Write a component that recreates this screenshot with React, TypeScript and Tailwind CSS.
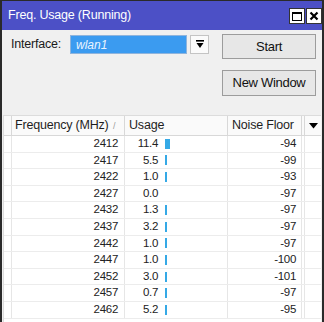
import React from "react";

type Row = { freq: number; usage: number; noise: number };

const rows: Row[] = [
  { freq: 2412, usage: 11.4, noise: -94 },
  { freq: 2417, usage: 5.5, noise: -99 },
  { freq: 2422, usage: 1.0, noise: -93 },
  { freq: 2427, usage: 0.0, noise: -97 },
  { freq: 2432, usage: 1.3, noise: -97 },
  { freq: 2437, usage: 3.2, noise: -97 },
  { freq: 2442, usage: 1.0, noise: -97 },
  { freq: 2447, usage: 1.0, noise: -100 },
  { freq: 2452, usage: 3.0, noise: -101 },
  { freq: 2457, usage: 0.7, noise: -97 },
  { freq: 2462, usage: 5.2, noise: -95 },
];

function TitleButton({ kind }: { kind: "max" | "close" }) {
  return (
    <div className="w-[16px] h-[16px] bg-white border border-[#333] flex items-center justify-center">
      {kind === "max" ? (
        <div className="w-[10px] h-[9px] border border-black border-t-[2px]" />
      ) : (
        <svg width="10" height="10" viewBox="0 0 10 10">
          <path d="M1.5 1.5 L8.5 8.5 M8.5 1.5 L1.5 8.5" stroke="black" strokeWidth="2.2" />
        </svg>
      )}
    </div>
  );
}

function App() {
  return (
    <div
      className="w-[324px] h-[322px] overflow-hidden bg-[#f0f0f0] border-x-2 border-t border-[#2a2a2a] flex flex-col"
      style={{ fontFamily: '"Liberation Sans", Arial, sans-serif' }}
    >
      {/* title bar */}
      <div className="h-[29px] bg-[#4c50c6] flex items-center justify-between pl-[6px] pr-[0px] shrink-0">
        <span className="text-white text-[12.5px] tracking-[-0.2px]">Freq. Usage (Running)</span>
        <div className="flex gap-[1px] mt-[1px]">
          <TitleButton kind="max" />
          <TitleButton kind="close" />
        </div>
      </div>

      {/* controls */}
      <div className="flex pt-[4px] pl-[9px] shrink-0">
        <div className="flex items-center h-[19px] mt-[1px]">
          <span className="text-[12.5px] text-[#1a1a1a] w-[59px] tracking-[-0.2px]">Interface:</span>
          <div className="w-[117px] h-[19px] bg-[#3b9bf0] border border-[#8fb4dc] flex items-center pl-[5px]">
            <span className="italic text-[12px] text-[#eaf4ff]">wlan1</span>
          </div>
          <div className="ml-[3px] w-[19px] h-[19px] bg-[#fbfbfb] border border-[#c4c4c4] flex items-center justify-center">
            <svg width="8" height="9" viewBox="0 0 8 9">
              <rect x="0" y="0" width="8" height="1.6" fill="black" />
              <path d="M0.5 3 H7.5 L4 8 Z" fill="black" />
            </svg>
          </div>
        </div>
        <div className="ml-[13px] flex flex-col gap-[11px]">
          <button className="w-[94px] h-[25px] bg-[#e7e7e7] border border-[#9c9c9c] text-[13px] text-[#111] tracking-[-0.3px]">
            Start
          </button>
          <button className="w-[94px] h-[26px] bg-[#e7e7e7] border border-[#9c9c9c] text-[13px] text-[#111] tracking-[-0.3px]">
            New Window
          </button>
        </div>
      </div>

      {/* table */}
      <div className="mt-[19px] ml-[1px] mr-[1px] bg-white border-l border-t border-[#dcdcdc] flex-1">
        <div className="flex h-[20px] border-b border-[#d8d8d8] bg-[#fafafa] text-[12.5px] text-[#1e1e1e] tracking-[-0.2px]">
          <div className="w-[8px] border-r border-[#d8d8d8]" />
          <div className="w-[113px] border-r border-[#d8d8d8] flex items-center pl-[3px] relative">
            Frequency (MHz)
            <span className="absolute left-[101px] top-[4px] text-[9px] text-[#9a9a9a]">/</span>
          </div>
          <div className="w-[103px] border-r border-[#d8d8d8] flex items-center pl-[4px]">Usage</div>
          <div className="w-[74px] border-r border-[#d8d8d8] flex items-center pl-[4px]">Noise Floor</div>
          <div className="w-[3px] border-r border-[#d8d8d8]" />
          <div className="flex-1 flex items-center justify-center">
            <svg width="9" height="6" viewBox="0 0 9 6">
              <path d="M0 0 H9 L4.5 5.5 Z" fill="black" />
            </svg>
          </div>
        </div>
        {rows.map((r) => (
          <div
            key={r.freq}
            className="flex h-[16.6px] border-b border-[#ececec] text-[11.5px] text-[#222] leading-none tracking-[-0.3px]"
          >
            <div className="w-[8px] border-r border-[#e6e6e6]" />
            <div className="w-[113px] border-r border-[#e6e6e6] flex items-center justify-end pr-[6px]">{r.freq}</div>
            <div className="w-[103px] border-r border-[#e6e6e6] flex items-center">
              <span className="w-[33px] text-right">{r.usage.toFixed(1)}</span>
              <div className="ml-[7px] h-[10px] flex items-center">
                {r.usage > 0 && (
                  <div
                    className="h-[10px] bg-[#35a9e6]"
                    style={{ width: `${Math.max(1.5, r.usage * 0.45)}px` }}
                  />
                )}
              </div>
            </div>
            <div className="w-[74px] border-r border-[#e6e6e6] flex items-center justify-end pr-[5px]">{r.noise}</div>
            <div className="w-[3px] border-r border-[#e6e6e6]" />
            <div className="flex-1" />
          </div>
        ))}
      </div>
    </div>
  );
}

export default App;
